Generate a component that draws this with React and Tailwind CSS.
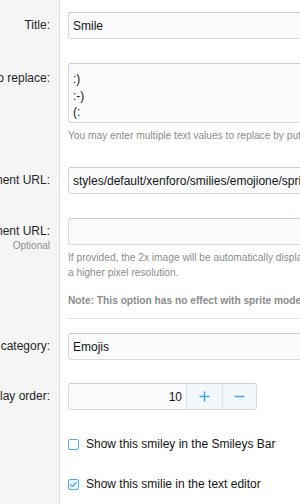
import React from "react";

const inputCls =
  "h-[27px] w-[420px] shrink-0 rounded-[3px] border border-[#d8d8d8] border-t-[#cdcdcd] bg-[#f9fbfd] pl-[4px] flex items-center text-[12px] text-[#141414] whitespace-nowrap";

function Label({ children, pt, extra }) {
  return (
    <div className={`w-[60px] shrink-0 bg-[#f5f5f5] border-r border-[#e0e0e0] overflow-hidden flex flex-col items-end pr-[9px] ${pt}`}>
      <span className="whitespace-nowrap text-[12px] leading-[15px] text-[#252525]">{children}</span>
      {extra}
    </div>
  );
}

export default function App() {
  return (
    <div
      className="w-[300px] h-[504px] overflow-hidden bg-white flex flex-col"
      style={{ fontFamily: '"Liberation Sans", Arial, sans-serif' }}
    >
      {/* Title */}
      <div className="flex">
        <Label pt="pt-[18px]">Title:</Label>
        <div className="flex-1 pl-[8px] pt-[12px] pb-[12px] overflow-hidden">
          <div className={inputCls}>Smile</div>
        </div>
      </div>

      {/* Text to replace */}
      <div className="flex">
        <Label pt="pt-[20px]">Text to replace:</Label>
        <div className="flex-1 pl-[8px] pt-[12px] pb-[12px] overflow-hidden">
          <div className="h-[60px] w-[420px] rounded-[3px] border border-[#d8d8d8] border-t-[#cdcdcd] bg-[#f9fbfd] pl-[4px] pt-[7px] text-[12px] leading-[16.5px] text-[#141414]">
            <div>:)</div>
            <div>:-)</div>
            <div>(:</div>
          </div>
          <div className="mt-[5px] text-[10.2px] leading-[15px] text-[#8c8c8c] whitespace-nowrap">
            You may enter multiple text values to replace by putting each on its own line.
          </div>
        </div>
      </div>

      {/* Image replacement URL */}
      <div className="flex">
        <Label pt="pt-[18px]">Image replacement URL:</Label>
        <div className="flex-1 pl-[8px] pt-[12px] pb-[12px] overflow-hidden">
          <div className={inputCls}>styles/default/xenforo/smilies/emojione/sprite_sheet_emojione.png</div>
        </div>
      </div>

      {/* 2x image */}
      <div className="flex">
        <Label
          pt="pt-[18px]"
          extra={<span className="whitespace-nowrap text-[10px] leading-[13px] text-[#8c8c8c]">Optional</span>}
        >
          2x image replacement URL:
        </Label>
        <div className="flex-1 pl-[8px] overflow-hidden">
          <div className="pt-[12px] pb-[10px] border-b border-[#e0e0e0]">
            <div className={inputCls}></div>
            <div className="mt-[5px] text-[10.2px] leading-[15px] text-[#8c8c8c] whitespace-nowrap">
              If provided, the 2x image will be automatically displayed instead of the standard image on devices capable of
              <br />
              a higher pixel resolution.
            </div>
            <div className="mt-[13px] text-[10.2px] leading-[15px] text-[#8c8c8c] font-bold whitespace-nowrap">
              Note: This option has no effect with sprite mode enabled.
            </div>
          </div>
        </div>
      </div>

      {/* Smilie category */}
      <div className="flex">
        <Label pt="pt-[20px]">Smilie category:</Label>
        <div className="flex-1 pl-[8px] pt-[14px] pb-[12px] overflow-hidden">
          <div className={inputCls}>Emojis</div>
        </div>
      </div>

      {/* Display order */}
      <div className="flex">
        <Label pt="pt-[17px]">Display order:</Label>
        <div className="flex-1 pl-[8px] pt-[11px] pb-[14px] overflow-hidden">
          <div className="flex h-[27px] w-[189px] rounded-[3px] border border-[#d8d8d8] border-t-[#cdcdcd] overflow-hidden text-[12px]">
            <div className="w-[117px] bg-[#f9fbfd] flex items-center justify-end pr-[4px] text-[#141414]">10</div>
            <div className="w-[36px] bg-[#f2f7fc] border-l border-[#dde4ea] flex items-center justify-center text-[#47a7eb]">
              <svg width="11" height="11" viewBox="0 0 11 11"><path d="M5.5 0.5v10M0.5 5.5h10" stroke="#47a7eb" strokeWidth="1.5" /></svg>
            </div>
            <div className="flex-1 bg-[#f2f7fc] border-l border-[#dde4ea] flex items-center justify-center text-[#47a7eb]">
              <svg width="11" height="11" viewBox="0 0 11 11"><path d="M0.5 5.5h10" stroke="#47a7eb" strokeWidth="1.5" /></svg>
            </div>
          </div>
        </div>
      </div>

      {/* Checkbox 1 */}
      <div className="flex">
        <div className="w-[60px] shrink-0 bg-[#f5f5f5] border-r border-[#e0e0e0]" />
        <div className="flex-1 h-[40px] pl-[8px] flex items-center overflow-hidden">
          <div className="w-[11px] h-[11px] rounded-[2px] border border-[#5aa9e0] bg-white shrink-0" />
          <span className="ml-[7px] text-[12px] text-[#141414] whitespace-nowrap">Show this smiley in the Smileys Bar</span>
        </div>
      </div>

      {/* Checkbox 2 */}
      <div className="flex">
        <div className="w-[60px] shrink-0 bg-[#f5f5f5] border-r border-[#e0e0e0]" />
        <div className="flex-1 h-[40px] pl-[8px] flex items-center overflow-hidden">
          <div className="w-[11px] h-[11px] rounded-[2px] border border-[#5aa9e0] bg-[#eaf4fc] shrink-0 flex items-center justify-center">
            <svg width="9" height="9" viewBox="0 0 9 9"><path d="M1.5 4.5l2 2 4-4.5" fill="none" stroke="#47a7eb" strokeWidth="1.2" /></svg>
          </div>
          <span className="ml-[7px] text-[12px] text-[#141414] whitespace-nowrap">Show this smilie in the text editor</span>
        </div>
      </div>

      {/* Footer */}
      <div className="flex-1 flex">
        <div className="w-[60px] shrink-0 bg-[#f5f5f5] border-r border-[#e0e0e0]" />
        <div className="flex-1 bg-[#f5f5f5] border-t border-[#e0e0e0]" />
      </div>
    </div>
  );
}
